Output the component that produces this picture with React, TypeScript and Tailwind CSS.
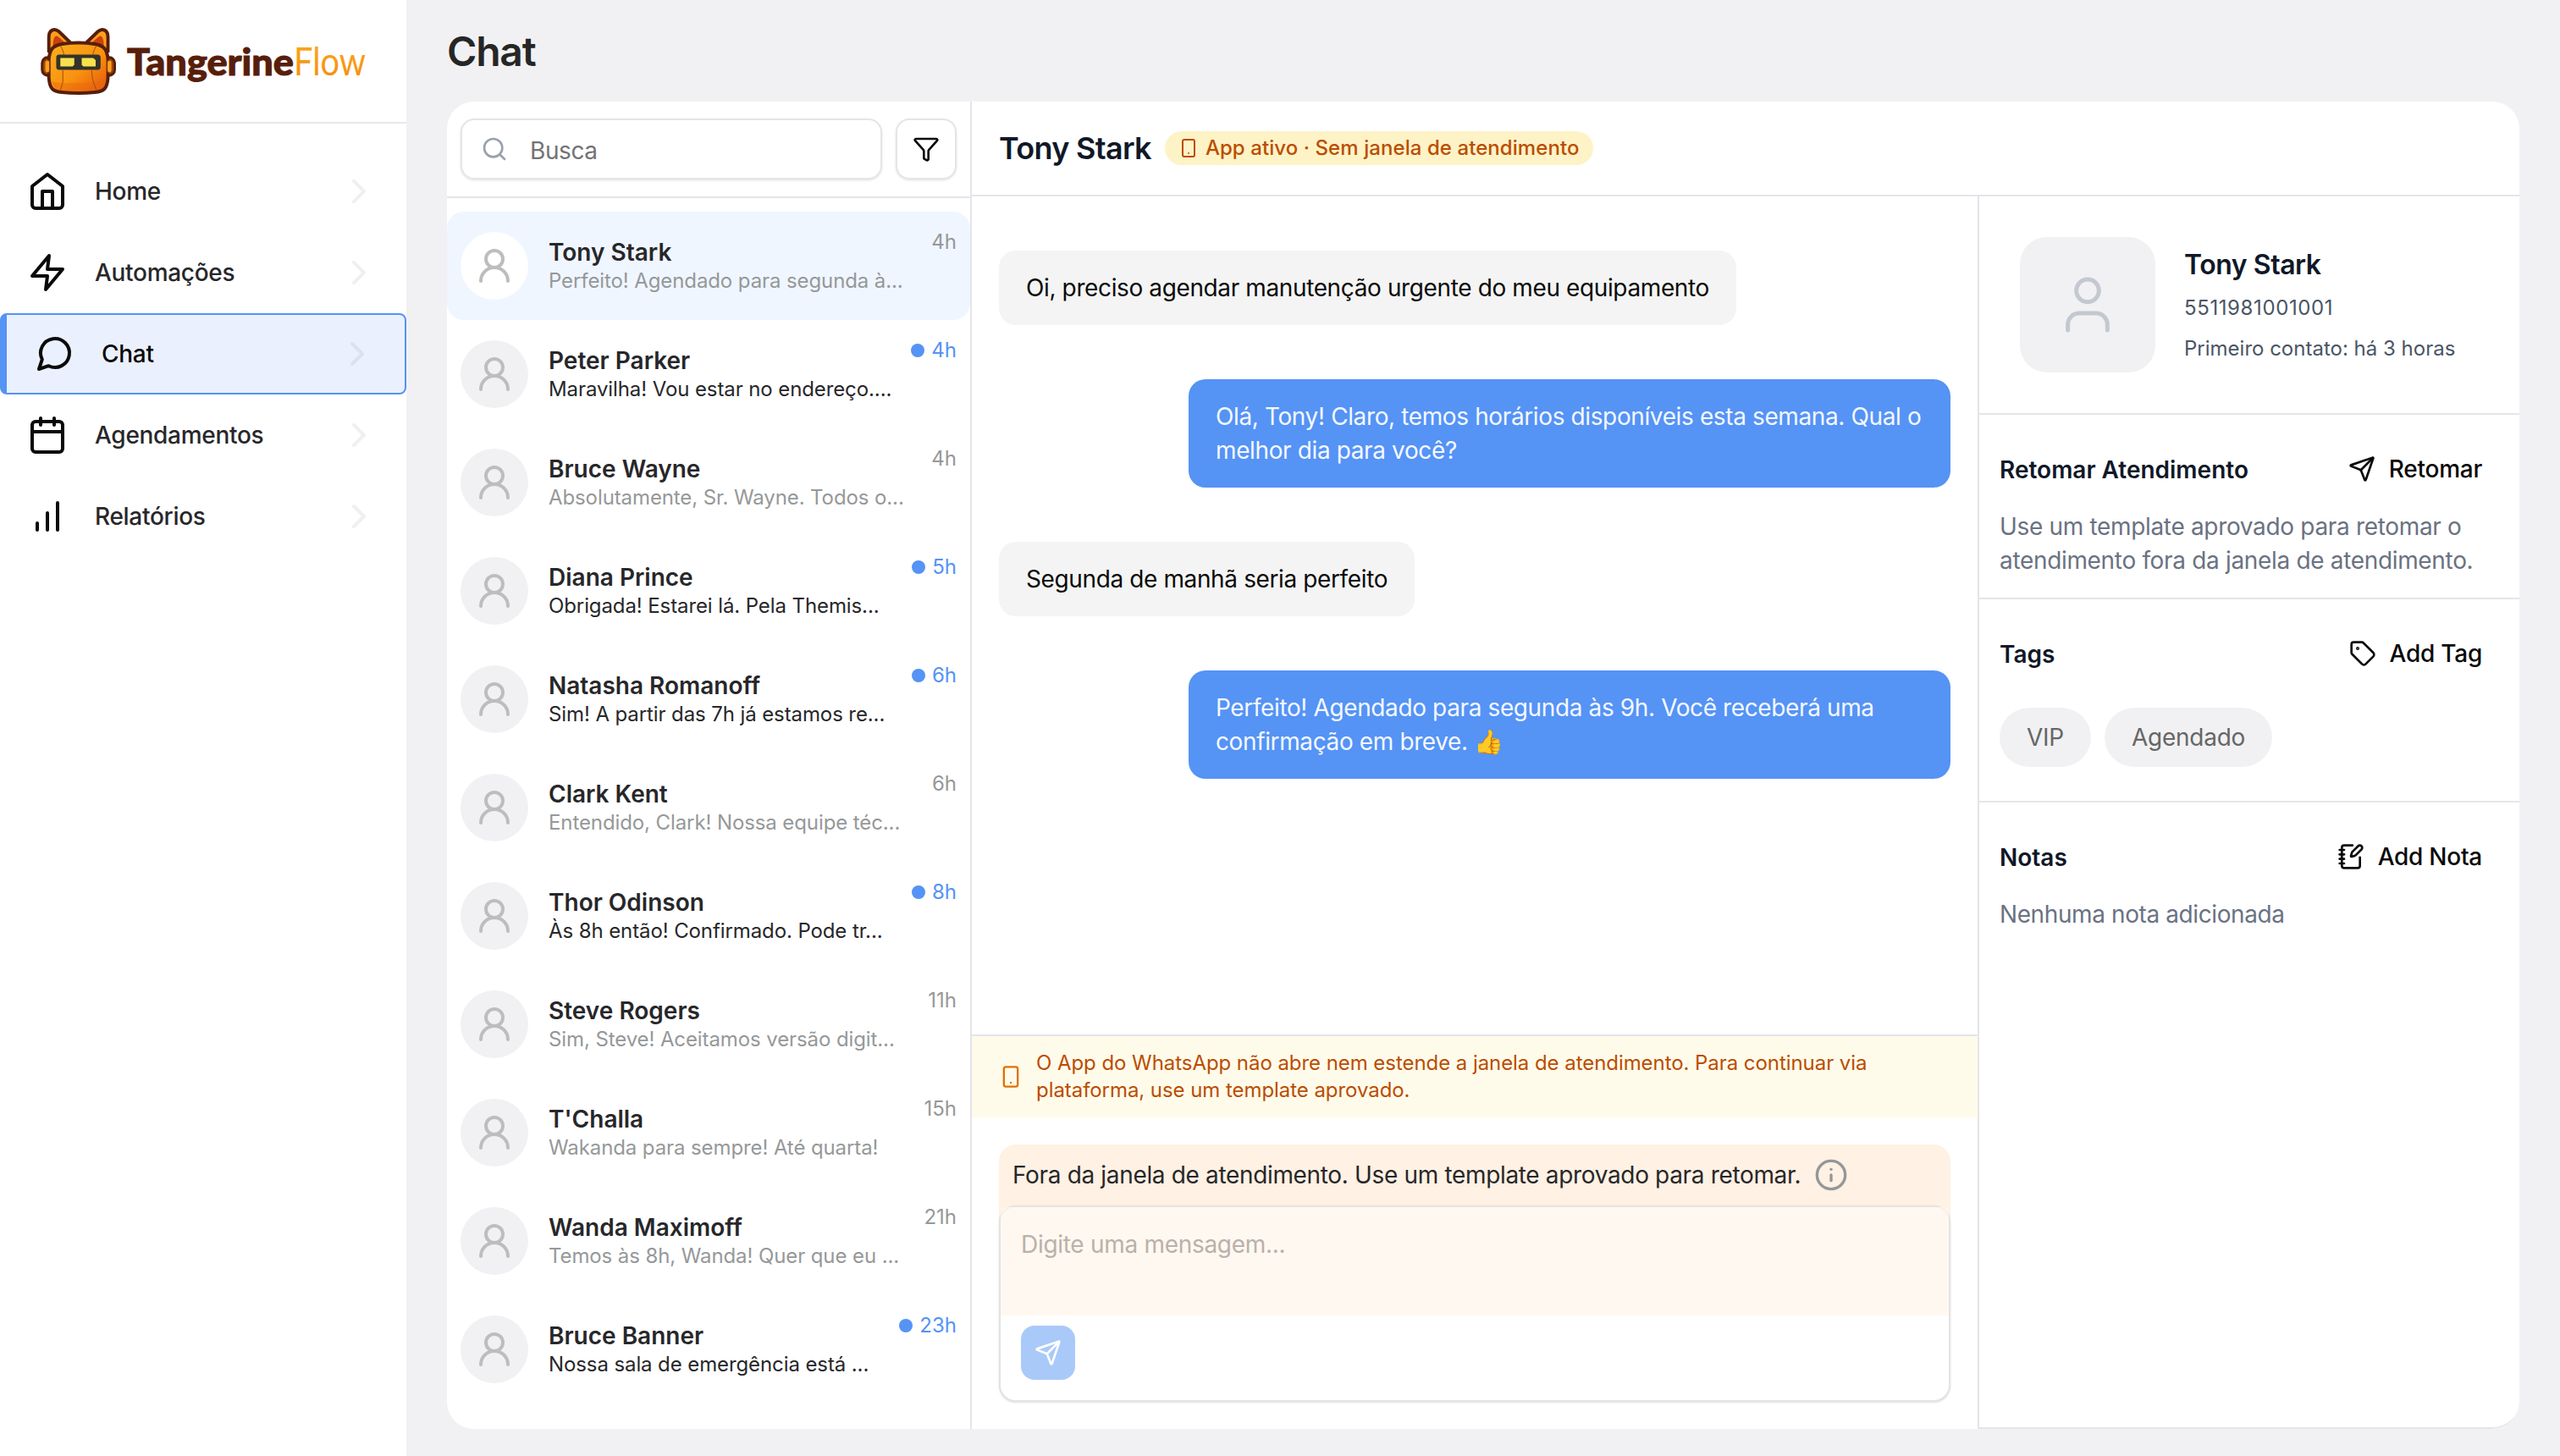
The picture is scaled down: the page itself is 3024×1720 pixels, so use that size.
import { Funnel, Info, NotebookPen, Search, Send, Smartphone, Tag, User, UserRound } from "lucide-react";
import { type ReactNode } from "react";
import { clsx } from "clsx";

interface NavItem {
  label: string;
  icon: ReactNode;
  active?: boolean;
}

interface Conversation {
  name: string;
  preview: string;
  time: string;
  unread?: boolean;
  selected?: boolean;
}

interface Message {
  text: string;
  mine?: boolean;
}

const navItems: NavItem[] = [
  {
    label: "Home",
    icon: (
      <>
        <path d="m3 9 9-7 9 7v11a2 2 0 0 1-2 2H5a2 2 0 0 1-2-2z" />
        <polyline points="9 22 9 12 15 12 15 22" />
      </>
    ),
  },
  {
    label: "Automações",
    icon: <polygon points="13 2 3 14 12 14 11 22 21 10 12 10 13 2" />,
  },
  {
    label: "Chat",
    icon: <path d="m3 21 1.9-5.7a8.5 8.5 0 1 1 3.8 3.8z" />,
    active: true,
  },
  {
    label: "Agendamentos",
    icon: (
      <>
        <rect width="18" height="18" x="3" y="4" rx="2" />
        <path d="M16 2v4M8 2v4M3 10h18" />
      </>
    ),
  },
  {
    label: "Relatórios",
    icon: <path d="M12 20V10M18 20V4M6 20v-4" />,
  },
];

const conversations: Conversation[] = [
  { name: "Tony Stark", preview: "Perfeito! Agendado para segunda à...", time: "4h", selected: true },
  { name: "Peter Parker", preview: "Maravilha! Vou estar no endereço....", time: "4h", unread: true },
  { name: "Bruce Wayne", preview: "Absolutamente, Sr. Wayne. Todos o...", time: "4h" },
  { name: "Diana Prince", preview: "Obrigada! Estarei lá. Pela Themis...", time: "5h", unread: true },
  { name: "Natasha Romanoff", preview: "Sim! A partir das 7h já estamos re...", time: "6h", unread: true },
  { name: "Clark Kent", preview: "Entendido, Clark! Nossa equipe téc...", time: "6h" },
  { name: "Thor Odinson", preview: "Às 8h então! Confirmado. Pode tr...", time: "8h", unread: true },
  { name: "Steve Rogers", preview: "Sim, Steve! Aceitamos versão digit...", time: "11h" },
  { name: "T'Challa", preview: "Wakanda para sempre! Até quarta!", time: "15h" },
  { name: "Wanda Maximoff", preview: "Temos às 8h, Wanda! Quer que eu ...", time: "21h" },
  { name: "Bruce Banner", preview: "Nossa sala de emergência está ...", time: "23h", unread: true },
];

const messages: Message[] = [
  { text: "Oi, preciso agendar manutenção urgente do meu equipamento" },
  { text: "Olá, Tony! Claro, temos horários disponíveis esta semana. Qual o melhor dia para você?", mine: true },
  { text: "Segunda de manhã seria perfeito" },
  { text: "Perfeito! Agendado para segunda às 9h. Você receberá uma confirmação em breve. 👍", mine: true },
];

function Logo() {
  return (
    <svg viewBox="0 0 420 84" className="h-[84px] w-[420px] overflow-visible">
      <defs>
        <linearGradient id="head" x1="0" y1="0" x2="1" y2="1">
          <stop offset="0" stopColor="#fbb020" />
          <stop offset="0.55" stopColor="#f9920f" />
          <stop offset="1" stopColor="#e2500c" />
        </linearGradient>
        <linearGradient id="flow" x1="0" y1="0" x2="0" y2="1">
          <stop offset="0" stopColor="#fbab1e" />
          <stop offset="1" stopColor="#f58a0b" />
        </linearGradient>
      </defs>
      <g transform="scale(0.97 1)">
        {/* Ears */}
        <path d="M10 30V12C10 3 17 1 22 5L38 20M82 30V12C82 3 75 1 70 5L54 20" fill="#fba01c" stroke="#571e0b" strokeWidth="4" strokeLinejoin="round" />
        <path d="M15 22C15 12 18 9 21 11L34 22ZM77 22C77 12 74 9 71 11L58 22Z" fill="#cf3f0d" />
        {/* Headphones */}
        <rect x="2" y="36" width="13" height="21" rx="6.5" fill="#f57c12" stroke="#571e0b" strokeWidth="3.5" />
        <rect x="77" y="36" width="13" height="21" rx="6.5" fill="#f57c12" stroke="#571e0b" strokeWidth="3.5" />
        {/* Head */}
        <path d="M26 20Q46 17 66 20C78 22 81 27 82 38V60C81 73 77 76 66 77Q46 79 26 77C15 76 11 73 10 60V38C11 27 14 22 26 20Z" fill="url(#head)" stroke="#571e0b" strokeWidth="4" />
        <path d="M14 64Q20 66 29 66H60Q72 65 79 58C79 70 75 74 64 75H28C18 74 15 71 14 64Z" fill="#e8660d" opacity="0.45" />
        <path d="M24 22Q29 30 28 34M68 22Q63 30 64 34M27 51V65L24 75M62 51Q62 62 68 75" fill="none" stroke="#a8480c" strokeWidth="1" />
        <rect x="5" y="39" width="6" height="15" rx="3" fill="#fba01c" stroke="#8a340c" strokeWidth="1.2" />
        <rect x="81" y="39" width="6" height="15" rx="3" fill="#fba01c" stroke="#8a340c" strokeWidth="1.2" />
        {/* Visor */}
        <rect x="19" y="32.500" width="54" height="18" rx="3.500" fill="#33322c" />
        <path d="M24 36.500H41V44.500L39 46.500H24ZM50 36.500H64L67 39V46.500H52L50 44.500Z" fill="#f8e04d" />
      </g>
      <text x="102" y="57" textLength="197" lengthAdjust="spacingAndGlyphs" fill="#571e0b" stroke="#571e0b" strokeWidth="1" className="font-['Lato'] text-[43px] font-black">
        Tangerine
      </text>
      <text x="299" y="57" textLength="85" lengthAdjust="spacingAndGlyphs" fill="url(#flow)" className="font-['Lato'] text-[46px] font-normal">
        Flow
      </text>
    </svg>
  );
}

function NavRow({ label, icon, active }: NavItem) {
  return (
    <a
      className={clsx(
        "flex h-24 items-center px-8 text-[28px] font-medium tracking-[-0.3px]",
        active ? "rounded-lg border-2 border-l-8 border-[#5593f5] bg-[#eaf0fd] text-[#0a0a0a]" : "text-[#27272a]"
      )}
    >
      <svg viewBox="0 0 24 24" className="h-12 w-12 fill-none stroke-[#0a0a0a] stroke-2" strokeLinecap="round" strokeLinejoin="round">
        {icon}
      </svg>
      <span className="ml-8 flex-1">{label}</span>
      <svg viewBox="0 0 24 24" className="h-12 w-12 fill-none stroke-black stroke-2 opacity-[0.055]" strokeLinecap="round" strokeLinejoin="round">
        <path d="m9 18 6-6-6-6" />
      </svg>
    </a>
  );
}

function ConversationRow({ name, preview, time, unread, selected }: Conversation) {
  return (
    <li className={clsx("flex h-32 shrink-0 items-center rounded-[20px] px-4", selected && "bg-[#eff6ff]")}>
      <div className={clsx("flex h-20 w-20 shrink-0 items-center justify-center rounded-full", selected ? "bg-white" : "bg-[#f1f1f3]")}>
        <UserRound className="h-12 w-12 text-[#bdbdbd]" />
      </div>
      <div className="ml-6 min-w-0 flex-1 whitespace-nowrap">
        <p className="text-[28px] font-semibold leading-[34px] text-[#27272a]">{name}</p>
        <p className={clsx("mt-px text-[24px] leading-[32px] tracking-[-0.1px]", unread ? "text-[#27272a]" : "text-[#969899]")}>{preview}</p>
      </div>
      <div className={clsx("-ml-24 flex items-center gap-2 self-start pt-5 text-[24px] leading-[32px]", unread ? "text-[#5593f5]" : "text-[#969899]")}>
        {unread && <span className="h-4 w-4 rounded-full bg-[#5593f5]" />}
        {time}
      </div>
    </li>
  );
}

function SectionHeader({ title, action, icon }: { title: string; action: string; icon: ReactNode }) {
  return (
    <div className="flex h-10 items-center justify-between pr-5">
      <h3 className="pt-px text-[28px] font-semibold text-[#101828]">{title}</h3>
      <button className="flex items-center gap-4 text-[28px] font-medium tracking-[-0.25px] text-[#0a0a0a]">
        {icon}
        {action}
      </button>
    </div>
  );
}

export default function App() {
  return (
    <div className="flex h-[1720px] w-[3024px] overflow-hidden bg-[#f1f1f3] font-['Inter',sans-serif]">
      <aside className="flex w-[480px] shrink-0 flex-col bg-white">
        <div className="h-[146px] border-b-2 border-[#e8e8ea] pl-12 pt-8">
          <Logo />
        </div>
        <nav className="pt-8">
          {navItems.map((item) => (
            <NavRow key={item.label} {...item} />
          ))}
        </nav>
      </aside>

      <main className="flex flex-1 flex-col px-12 pb-8">
        <h1 className="flex h-[120px] items-center pt-0.5 text-[48px] font-semibold tracking-tight text-[#262626]">Chat</h1>

        <div className="flex min-h-0 flex-1 overflow-hidden rounded-[32px] bg-white">
          {/* Conversation list */}
          <section className="flex w-[620px] shrink-0 flex-col border-r-2 border-[#e4e5ea]">
            <div className="flex h-[114px] shrink-0 items-center gap-4 border-b-2 border-[#e4e5ea] px-4">
              <div className="flex h-[72px] flex-1 items-center rounded-[16px] border-2 border-[#e5e5e5] pl-[22px] shadow-sm">
                <Search className="h-8 w-8 text-[#99a1af]" />
                <span className="ml-[26px] pt-1 text-[28px] tracking-[-0.4px] text-[#737373]">Busca</span>
              </div>
              <button className="flex h-[72px] w-[72px] items-center justify-center rounded-[16px] border-2 border-[#e5e5e5] shadow-sm">
                <Funnel className="h-8 w-8 text-[#0a0a0a]" />
              </button>
            </div>
            <ul className="flex flex-col pt-4">
              {conversations.map((conversation) => (
                <ConversationRow key={conversation.name} {...conversation} />
              ))}
            </ul>
          </section>

          <div className="flex min-w-0 flex-1 flex-col">
            <header className="flex h-[112px] shrink-0 items-center gap-4 border-b-2 border-[#e4e5ea] pl-8">
              <h2 className="text-[36px] font-semibold tracking-[-0.7px] text-[#101828]">Tony Stark</h2>
              <span className="flex h-10 items-center gap-2 rounded-full bg-[#fef3c6] px-4 text-[24px] font-medium tracking-[0.07px] text-[#bb4d00]">
                <Smartphone className="h-6 w-6" />
                App ativo · Sem janela de atendimento
              </span>
            </header>

            <div className="flex min-h-0 flex-1">
              <section className="flex w-[1188px] shrink-0 flex-col">
                <div className="flex flex-1 flex-col gap-16 px-8 pt-16">
                  {messages.map((message) => (
                    <div
                      key={message.text}
                      className={clsx(
                        "rounded-[20px] py-6 pl-8 text-[28px] leading-[40px] tracking-[-0.38px]",
                        message.mine ? "w-[900px] self-end bg-[#5593f5] pr-6 text-[#f4f8ff]" : "self-start bg-[#f4f4f4] pr-8 text-[#0a0a0a]"
                      )}
                    >
                      {message.text}
                    </div>
                  ))}
                </div>

                <div className="flex h-[98px] shrink-0 items-center gap-4 border-t-2 border-[#e4e5e7] bg-[#fffbeb] px-8 text-[24px] leading-[32px] tracking-[-0.06px] text-[#bb4d00]">
                  <Smartphone className="h-7 w-7 shrink-0 text-[#e17100]" />
                  <p>
                    O App do WhatsApp não abre nem estende a janela de atendimento. Para continuar via
                    <br />
                    plataforma, use um template aprovado.
                  </p>
                </div>

                <div className="shrink-0 p-8">
                  <div className="rounded-[20px] bg-[#fff1e3]">
                    <div className="flex h-[72px] items-center gap-4 pl-4 text-[28px] tracking-[-0.34px] text-[#27272a]">
                      Fora da janela de atendimento. Use um template aprovado para retomar.
                      <Info className="h-10 w-10 text-[#949799]" />
                    </div>
                    <div className="h-[232px] rounded-[20px] border-2 border-[#e4e4e4] bg-white shadow-sm">
                      <div className="h-32 bg-[#fff5ec]/75 px-6 pt-6 text-[28px] leading-[40px] tracking-[-0.3px] text-[#bab1a9]">Digite uma mensagem...</div>
                      <button className="ml-6 mt-3 flex h-16 w-16 items-center justify-center rounded-[16px] bg-[#a9c9f9]">
                        <Send className="h-8 w-8 text-white" />
                      </button>
                    </div>
                  </div>
                </div>
              </section>

              {/* Contact details */}
              <aside className="flex min-w-0 flex-1 flex-col rounded-br-[32px] border-b-2 border-l-2 border-[#e4e5ea]">
                <div className="flex h-[258px] items-center border-b-2 border-[#e4e5ea] pl-12">
                  <div className="flex h-40 w-40 items-center justify-center rounded-[32px] bg-[#f1f1f3]">
                    <User className="h-20 w-20 text-[#c3c8d1]" strokeWidth={1.5} />
                  </div>
                  <div className="ml-[34px] text-[24px] text-[#4a5565]">
                    <h3 className="pt-px text-[32px] font-semibold leading-[48px] tracking-[-0.45px] text-[#101828]">Tony Stark</h3>
                    <p className="mt-[7px] leading-[40px] tracking-[0.6px]">5511981001001</p>
                    <p className="mt-2 leading-[40px]">Primeiro contato: há 3 horas</p>
                  </div>
                </div>

                <div className="h-[218px] border-b-2 border-[#e4e5ea] px-6 pt-11">
                  <SectionHeader title="Retomar Atendimento" action="Retomar" icon={<Send className="h-8 w-8" />} />
                  <p className="mt-7 text-[28px] leading-[40px] tracking-[-0.33px] text-[#6a7282]">
                    Use um template aprovado para retomar o
                    <br />
                    atendimento fora da janela de atendimento.
                  </p>
                </div>

                <div className="h-[240px] border-b-2 border-[#e4e5ea] px-6 pt-11">
                  <SectionHeader title="Tags" action="Add Tag" icon={<Tag className="h-8 w-8" />} />
                  <div className="mt-11 flex gap-4 text-[28px] tracking-[-0.25px] text-[#666666]">
                    <span className="flex h-[70px] items-center rounded-full bg-[#f1f1f3] px-8">VIP</span>
                    <span className="flex h-[70px] items-center rounded-full bg-[#f1f1f3] px-8">Agendado</span>
                  </div>
                </div>

                <div className="px-6 pt-11">
                  <SectionHeader title="Notas" action="Add Nota" icon={<NotebookPen className="h-8 w-8" />} />
                  <p className="mt-7 text-[28px] leading-[40px] tracking-[-0.4px] text-[#6a7282]">Nenhuma nota adicionada</p>
                </div>
              </aside>
            </div>
          </div>
        </div>
      </main>
    </div>
  );
}
